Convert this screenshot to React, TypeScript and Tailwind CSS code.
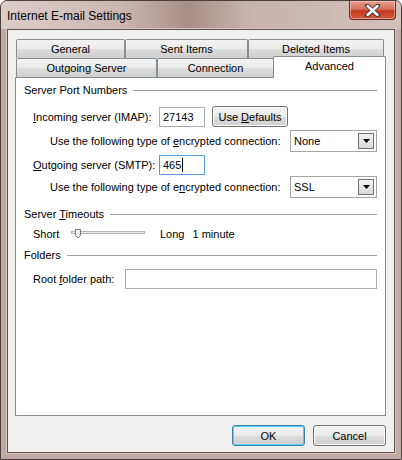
import React from 'react';

function Tab({ label, w, active }: { label: string; w: number; active?: boolean }) {
  if (active) {
    return (
      <div
        style={{ width: w }}
        className="relative z-10 -ml-[1px] -mb-[1px] flex h-[22px] justify-center rounded-t-[2px] border border-b-0 border-[#898c95] bg-white pt-[2px]"
      >
        {label}
      </div>
    );
  }
  return (
    <div
      style={{ width: w }}
      className="flex h-[19px] items-center justify-center rounded-t-[2px] border border-b-0 border-[#898c95] bg-[linear-gradient(#f2f2f2_0%,#ebebeb_50%,#dddddd_51%,#cfcfcf_100%)] pb-[1px]"
    >
      {label}
    </div>
  );
}

function Group({ children }: { children: React.ReactNode }) {
  return (
    <div className="flex h-[14px] items-center pl-[8px] pr-[8px]">
      <span className="whitespace-nowrap">{children}</span>
      <div className="ml-[6px] h-px flex-1 bg-[#a0a0a0]" />
    </div>
  );
}

function TextBox({ value, w, focused, caret }: { value?: string; w: number; focused?: boolean; caret?: boolean }) {
  return (
    <div
      style={{ width: w }}
      className={`flex h-[20px] items-center bg-white pl-[3px] border ${
        focused ? 'border-[#569de5]' : 'border-[#abadb3]'
      }`}
    >
      {value}
      {caret && <span className="ml-[1px] inline-block h-[14px] w-px bg-black" />}
    </div>
  );
}

function Combo({ value }: { value: string }) {
  return (
    <div className="flex h-[22px] w-[87px] items-center justify-between border border-[#a5a5a5] bg-white pl-[3px] pr-[2px]">
      <span>{value}</span>
      <div className="flex h-[16px] w-[16px] items-center justify-center border border-[#707070] bg-[linear-gradient(#f4f4f4,#d9d9d9)]">
        <svg width="7" height="4" viewBox="0 0 7 4">
          <path d="M0 0h7L3.5 4z" fill="#000" />
        </svg>
      </div>
    </div>
  );
}

function Button({ children, w, primary }: { children: React.ReactNode; w: number; primary?: boolean }) {
  return (
    <div
      style={{ width: w }}
      className={`flex h-[21px] items-center justify-center rounded-[3px] border bg-[linear-gradient(#f2f2f2_0%,#ebebeb_50%,#dddddd_51%,#cfcfcf_100%)] ${
        primary
          ? 'border-[#3c7fb1] shadow-[inset_0_0_0_1px_#48d8fb]'
          : 'border-[#707070] shadow-[inset_0_0_0_1px_#fcfcfc]'
      }`}
    >
      {children}
    </div>
  );
}

export default function App() {
  return (
    <div className="h-[460px] w-[402px] overflow-hidden rounded-t-[7px] border border-[#4a3f3d] bg-[#c2a9a4] font-['Liberation_Sans',Arial,sans-serif] text-[11px] leading-[14px] text-black">
      {/* title bar */}
      <div className="flex h-[28px] items-start justify-between bg-[linear-gradient(90deg,#dccdc9_0%,#cbb6b1_30%,#a88e89_47%,#c8b3ae_62%,#d2c0bb_100%)]">
        <span className="mt-[8px] ml-[6px] text-[12px] leading-[14px] text-black">Internet E-mail Settings</span>
        <div className="mr-[5px] flex h-[19px] w-[47px] items-center justify-center rounded-b-[4px] border border-t-0 border-[#6e2a22] bg-[linear-gradient(#e8a18f_0%,#d5705c_45%,#c1391f_55%,#d25a3c_100%)] shadow-[inset_0_0_0_1px_rgba(255,220,210,0.5)]">
          <svg width="15" height="13" viewBox="0 0 15 13">
            <path d="M2 1.5L13 11.5M13 1.5L2 11.5" stroke="#3b3b3b" strokeWidth="4.2" strokeLinecap="round" />
            <path d="M2.5 2L12.5 11M12.5 2L2.5 11" stroke="#ffffff" strokeWidth="2.4" strokeLinecap="round" />
          </svg>
        </div>
      </div>

      {/* client area */}
      <div className="ml-[6px] h-[424px] w-[388px] border border-[#5e5250] bg-[#f0f0f0] shadow-[0_0_0_1px_#d9c9c5]">
        <div className="ml-[7px] w-[371px] pt-[9px]">
          <div className="flex pl-[1px]">
            <Tab label="General" w={109} />
            <Tab label="Sent Items" w={123} />
            <Tab label="Deleted Items" w={136} />
          </div>
          <div className="-mt-[2px] flex h-[21px] items-end pl-[1px]">
            <Tab label="Outgoing Server" w={141} />
            <Tab label="Connection" w={117} />
            <Tab label="Advanced" w={113} active />
          </div>

          {/* page */}
          <div className="h-[339px] border border-[#898c95] bg-white">
            <div className="mt-[5px]">
              <Group>Server Port Numbers</Group>
            </div>

            <div className="mt-[9px] flex h-[21px] items-center pl-[17px]">
              <span className="w-[126px] whitespace-nowrap">
                <u>I</u>ncoming server (IMAP):
              </span>
              <TextBox value="27143" w={46} />
              <div className="ml-[7px]">
                <Button w={76}>
                  Use <u className="ml-[3px]">D</u>efaults
                </Button>
              </div>
            </div>

            <div className="mt-[3px] flex h-[22px] items-center pl-[34px]">
              <span className="w-[240px] whitespace-nowrap">
                Use the following type of <u>e</u>ncrypted connection:
              </span>
              <Combo value="None" />
            </div>

            <div className="mt-[2px] flex h-[21px] items-center pl-[17px]">
              <span className="w-[126px] whitespace-nowrap">
                <u>O</u>utgoing server (SMTP):
              </span>
              <TextBox value="465" w={46} focused caret />
            </div>

            <div className="mt-[1px] flex h-[22px] items-center pl-[34px]">
              <span className="w-[240px] whitespace-nowrap">
                Use the following type of e<u>n</u>crypted connection:
              </span>
              <Combo value="SSL" />
            </div>

            <div className="mt-[9px]">
              <Group>
                Server <u>T</u>imeouts
              </Group>
            </div>

            <div className="mt-[6px] flex h-[14px] items-center pl-[17px]">
              <span className="w-[38px]">Short</span>
              <svg width="78" height="12" viewBox="0 0 78 12" className="-ml-[2px]">
                <rect x="2.5" y="3.5" width="73" height="2" fill="#e7eaea" stroke="#b6b6b6" />
                <path d="M6.5 1.5h5v6l-2.5 2.5l-2.5-2.5z" fill="#f2f2f2" stroke="#7a7a7a" />
              </svg>
              <span className="ml-[13px]">Long</span>
              <span className="ml-[8px]">1 minute</span>
            </div>

            <div className="mt-[7px]">
              <Group>Folders</Group>
            </div>

            <div className="mt-[7px] flex h-[20px] items-center pl-[17px] pr-[8px]">
              <span className="w-[93px] whitespace-nowrap">
                Root <u>f</u>older path:
              </span>
              <div className="flex-1">
                <TextBox w={252} />
              </div>
            </div>
          </div>

          <div className="mt-[9px] flex justify-end gap-[8px]">
            <Button w={73} primary>
              OK
            </Button>
            <Button w={73}>Cancel</Button>
          </div>
        </div>
      </div>
    </div>
  );
}
